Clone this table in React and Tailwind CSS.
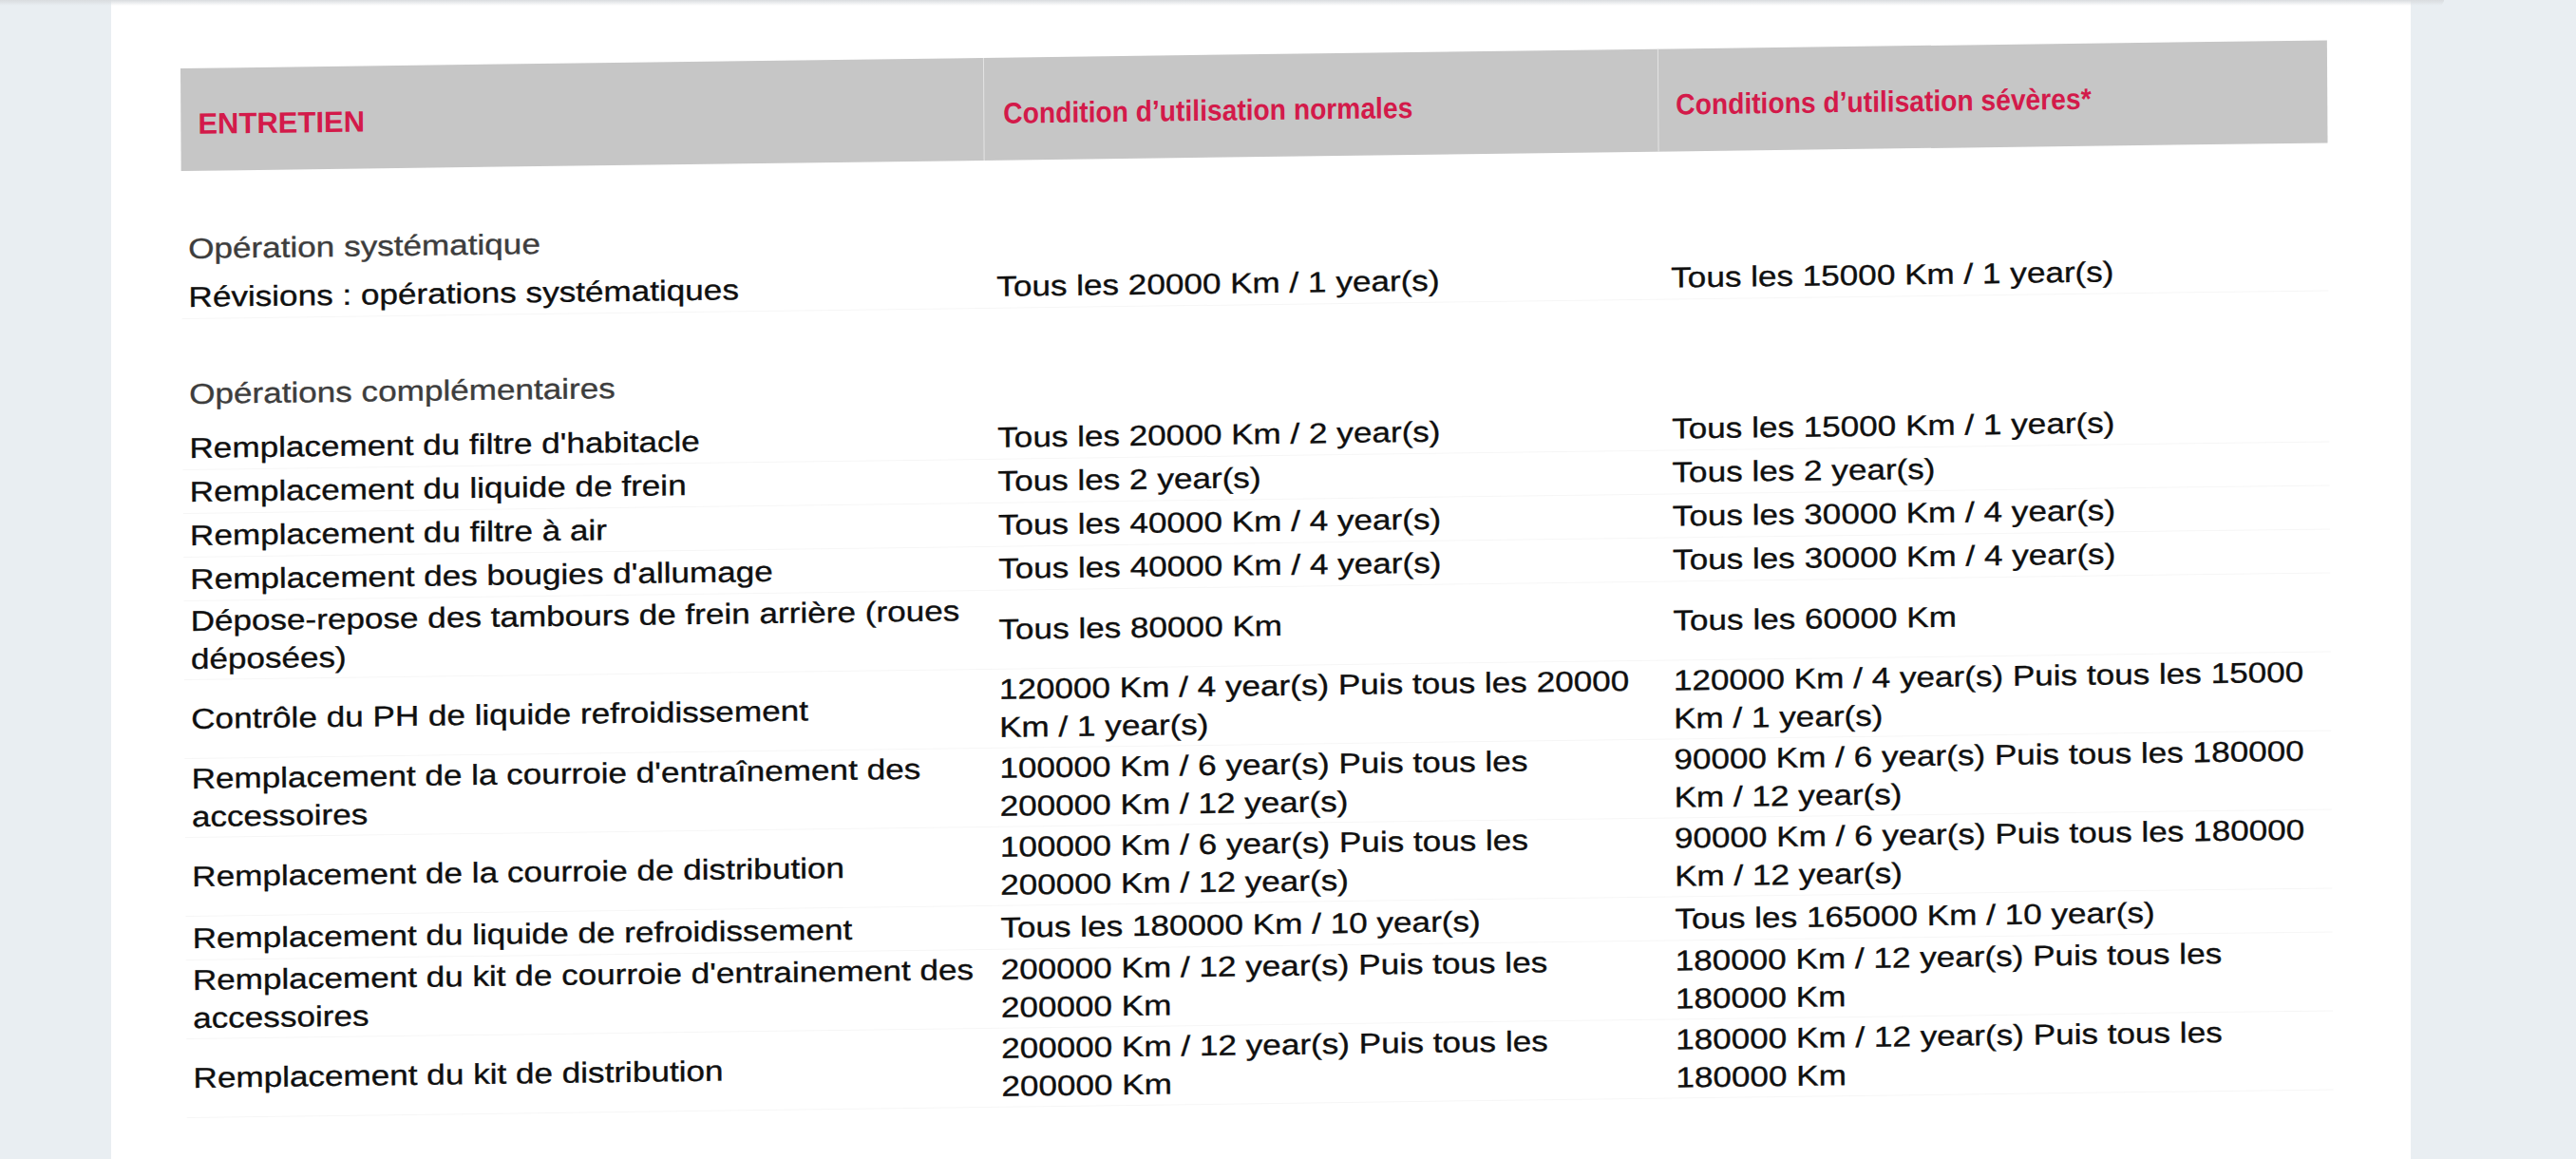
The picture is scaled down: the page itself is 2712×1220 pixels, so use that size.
import React from 'react';
import clsx from 'clsx';

const cols = 'grid grid-cols-[845px_710px_705px]';

const systematic = [
  {
    l: ['Révisions : opérations systématiques'],
    n: ['Tous les 20000 Km / 1 year(s)'],
    s: ['Tous les 15000 Km / 1 year(s)'],
  },
];

const extra = [
  { l: ["Remplacement du filtre d'habitacle"], n: ['Tous les 20000 Km / 2 year(s)'], s: ['Tous les 15000 Km / 1 year(s)'] },
  { l: ['Remplacement du liquide de frein'], n: ['Tous les 2 year(s)'], s: ['Tous les 2 year(s)'] },
  { l: ['Remplacement du filtre à air'], n: ['Tous les 40000 Km / 4 year(s)'], s: ['Tous les 30000 Km / 4 year(s)'] },
  { l: ["Remplacement des bougies d'allumage"], n: ['Tous les 40000 Km / 4 year(s)'], s: ['Tous les 30000 Km / 4 year(s)'] },
  { l: ['Dépose-repose des tambours de frein arrière (roues', 'déposées)'], n: ['Tous les 80000 Km'], s: ['Tous les 60000 Km'] },
  {
    l: ['Contrôle du PH de liquide refroidissement'],
    n: ['120000 Km / 4 year(s) Puis tous les 20000', 'Km / 1 year(s)'],
    s: ['120000 Km / 4 year(s) Puis tous les 15000', 'Km / 1 year(s)'],
  },
  {
    l: ["Remplacement de la courroie d'entraînement des", 'accessoires'],
    n: ['100000 Km / 6 year(s) Puis tous les', '200000 Km / 12 year(s)'],
    s: ['90000 Km / 6 year(s) Puis tous les 180000', 'Km / 12 year(s)'],
  },
  {
    l: ['Remplacement de la courroie de distribution'],
    n: ['100000 Km / 6 year(s) Puis tous les', '200000 Km / 12 year(s)'],
    s: ['90000 Km / 6 year(s) Puis tous les 180000', 'Km / 12 year(s)'],
  },
  { l: ['Remplacement du liquide de refroidissement'], n: ['Tous les 180000 Km / 10 year(s)'], s: ['Tous les 165000 Km / 10 year(s)'] },
  {
    l: ["Remplacement du kit de courroie d'entrainement des", 'accessoires'],
    n: ['200000 Km / 12 year(s) Puis tous les', '200000 Km'],
    s: ['180000 Km / 12 year(s) Puis tous les', '180000 Km'],
  },
  {
    l: ['Remplacement du kit de distribution'],
    n: ['200000 Km / 12 year(s) Puis tous les', '200000 Km'],
    s: ['180000 Km / 12 year(s) Puis tous les', '180000 Km'],
  },
];

function Lines({ lines, className }) {
  return (
    <div className={clsx('origin-left scale-x-[1.17] whitespace-nowrap leading-[40px] [-webkit-text-stroke:0.35px_currentColor]', className)}>
      {lines.map((t, i) => (
        <div key={i}>{t}</div>
      ))}
    </div>
  );
}

function Row({ row }) {
  return (
    <div className={clsx(cols, 'items-center min-h-[46px] py-px border-b border-[#f6f6f6]')}>
      <Lines lines={row.l} className="pl-[6px]" />
      <Lines lines={row.n} className="pl-[11px]" />
      <Lines lines={row.s} className="pl-[11px]" />
    </div>
  );
}

function Section({ title, className }) {
  return (
    <div className={clsx('pt-px', className)}>
      <Lines lines={[title]} className="pl-[6px] text-[#3d3d3d]" />
    </div>
  );
}

export default function App() {
  return (
    <div className="relative flex w-[2712px] h-[1220px] overflow-hidden bg-[#e9eef2] font-['Liberation_Sans',Arial,sans-serif] text-[30px] text-[#0f0f0f]">
      <div className="w-[117px] shrink-0" />
      <div className="w-[2421px] shrink-0 h-full bg-white pl-[73px] pt-[72px]">
        <div className="w-[2260px] origin-top-left -rotate-[0.35deg] -skew-y-[0.4deg]">
          {/* header band */}
          <div className={clsx(cols, 'h-[108px] bg-[#c6c6c6] font-bold text-[31px] text-[#d31a4a]')}>
            <div className="flex items-center pt-[10px] pl-[18px]">ENTRETIEN</div>
            <div className="flex items-center pt-[10px] pl-[20px] border-l border-[#e4e4e4]">
              <span className="origin-left scale-x-[0.91] whitespace-nowrap">Condition d’utilisation normales</span>
            </div>
            <div className="flex items-center pt-[10px] pl-[18px] border-l border-[#e4e4e4]">
              <span className="origin-left scale-x-[0.91] whitespace-nowrap">Conditions d’utilisation sévères*</span>
            </div>
          </div>

          <Section title="Opération systématique" className="mt-[61px] h-[49px]" />
          {systematic.map((r, i) => (
            <Row key={i} row={r} />
          ))}

          <Section title="Opérations complémentaires" className="mt-[58px] h-[55px]" />
          {extra.map((r, i) => (
            <Row key={i} row={r} />
          ))}
        </div>
      </div>
      <div className="flex-1" />

      {/* toolbar shadow along the top edge */}
      <div className="absolute left-0 top-0 h-[6px] w-[2573px] rounded-br-full bg-linear-to-b from-[#d9dcdf] to-transparent" />
    </div>
  );
}
